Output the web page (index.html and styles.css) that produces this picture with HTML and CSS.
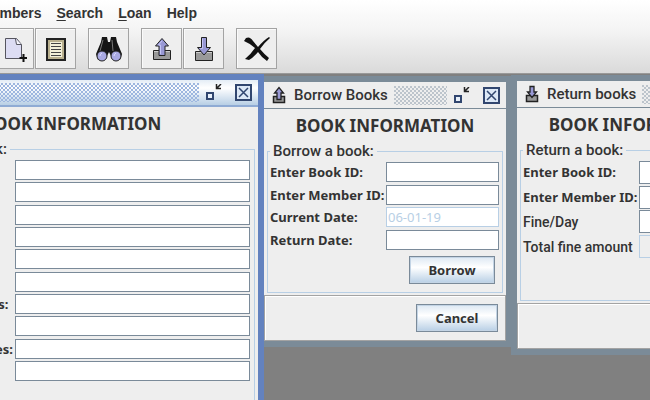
FILE: index.html
```html
<!DOCTYPE html>
<html lang="en">
<head>
<meta charset="utf-8">
<title>Library System</title>
<link rel="stylesheet" href="styles.css">
</head>
<body>
<svg class="defs" aria-hidden="true">
  <symbol id="borrow" viewBox="0 0 22 26">
    <path d="M2.5 14.500h17v9h-17z" fill="#999" stroke="#222"/>
    <path d="M3 15.500h16" stroke="#ccc"/>
    <path d="M8 19.500V10H4.500L11 2.500 17.500 10H14v9.500z" fill="#9999d5" stroke="#222"/>
    <path d="M9.500 18V9H7.500L11 5" fill="none" stroke="#c5c5f5"/>
  </symbol>
  <symbol id="return" viewBox="0 0 22 26">
    <path d="M2.500 15.500h17v9h-17z" fill="#999" stroke="#222"/>
    <path d="M3 16.500h16" stroke="#ccc"/>
    <path d="M8.500 1.500h5v10h4L11 19 4.500 11.500h4z" fill="#9999d5" stroke="#222"/>
    <path d="M9.500 2.500v10h-2" fill="none" stroke="#c5c5f5"/>
  </symbol>
  <symbol id="borrow-small" viewBox="0 0 15 18">
    <path d="M1.500 10.500h11v6h-11z" fill="#999" stroke="#222" stroke-width="1.500"/>
    <path d="M5 13.500V7H2.500L7 1.500 11.500 7H9v6.500z" fill="#9999d5" stroke="#222" stroke-width="1.300"/>
  </symbol>
  <symbol id="return-small" viewBox="0 0 15 18">
    <path d="M1.500 10.500h11v6h-11z" fill="#999" stroke="#222" stroke-width="1.500"/>
    <path d="M5 1.500h4V7h2.500L7 12.500 2.500 7H5z" fill="#9999d5" stroke="#222" stroke-width="1.300"/>
  </symbol>
  <symbol id="iconify" viewBox="0 0 17 17">
    <path d="M2 9h6v6H2z" fill="#e8f0fa" stroke="#31466f" stroke-width="2"/>
    <path d="M16 0l-4 4M11.500 0v4.500H16" fill="none" stroke="#222" stroke-width="1.500"/>
  </symbol>
  <symbol id="close" viewBox="0 0 17 17">
    <path d="M1 1h15v15H1z" fill="#dce8f6" stroke="#31466f" stroke-width="2"/>
    <path d="M4 4l9 9M13 4l-9 9" stroke="#31466f" stroke-width="1.500"/>
  </symbol>
</svg>

<header class="top">
  <nav class="menubar">
    <a href="#">Members</a>
    <a href="#"><u>S</u>earch</a>
    <a href="#"><u>L</u>oan</a>
    <a href="#">Help</a>
  </nav>
  <div class="toolbar">
    <button type="button" aria-label="Add book">
      <svg width="26" height="26" viewBox="0 0 26 26"><path d="M4.500 2.500h11l5 6v14h-16z" fill="#dcdcf3" stroke="#55555f"/><path d="M14.500 3l1 5.500h5" fill="#f4f4fc" stroke="#55555f"/><path d="M22.500 18v8M18.500 22h8" stroke="#111" stroke-width="2"/></svg>
    </button>
    <button type="button" aria-label="List books">
      <svg width="26" height="26" viewBox="0 0 26 26"><path d="M4 3h18v21H4z" fill="#b9b08e" stroke="#222" stroke-width="2"/><path d="M7 6h12v15H7z" fill="#f2efd8"/><path d="M8 7.500h10M8 10.500h10M8 13.500h10M8 16.500h10M8 19.500h10" stroke="#444"/></svg>
    </button>
    <button type="button" class="group" aria-label="Search">
      <svg width="26" height="26" viewBox="0 0 26 26"><path d="M6 1h5l1 5h2l1-5h5l1 5 5 12-2 6h-7l-4-8-4 8H2l-2-6L5 6z" fill="#151515"/><path d="M7 4L4 15M16 4l1 11" stroke="#777"/><circle cx="6" cy="20" r="5" fill="#a9a9e2" stroke="#222"/><circle cx="20" cy="20" r="5" fill="#a9a9e2" stroke="#222"/><path d="M4 20q0-2 2-3M18 20q0-2 2-3" fill="none" stroke="#dedeff"/></svg>
    </button>
    <button type="button" class="group" aria-label="Borrow books"><svg width="22" height="26"><use href="#borrow"/></svg></button>
    <button type="button" aria-label="Return books"><svg width="22" height="26"><use href="#return"/></svg></button>
    <button type="button" class="group" aria-label="Exit">
      <svg width="28" height="28" viewBox="0 0 28 28"><path d="M3 3q4-2 7 3l5 6q6-7 11-10l1 1q-5 4-10 11 5 6 9 9l-2 3q-5-3-9-9-5 6-9 8l-4-1q6-5 10-11Q8 9 1 6z" fill="#111"/></svg>
    </button>
  </div>
</header>

<main class="desktop">
  <section class="window active win-add">
    <div class="titlebar">
      <span class="title">Add Books</span><span class="grip"></span>
      <button type="button" aria-label="Minimize"><svg width="17" height="17"><use href="#iconify"/></svg></button>
      <button type="button" aria-label="Close"><svg width="17" height="17"><use href="#close"/></svg></button>
    </div>
    <h2>BOOK INFORMATION</h2>
    <fieldset>
      <legend>Add a new book:</legend>
      <div class="form">
        <label for="a1">Subject:</label><input id="a1">
        <label for="a2">Title:</label><input id="a2">
        <label for="a3">Author:</label><input id="a3">
        <label for="a4">Publisher:</label><input id="a4">
        <label for="a5">Copyright:</label><input id="a5">
        <label for="a6">Edition:</label><input id="a6">
        <label for="a7">Number of Pages:</label><input id="a7">
        <label for="a8">ISBN:</label><input id="a8">
        <label for="a9">Number of Copies:</label><input id="a9">
        <label for="a10">Library:</label><input id="a10">
      </div>
    </fieldset>
  </section>

  <section class="window win-borrow">
    <div class="titlebar">
      <svg class="app" width="15" height="18"><use href="#borrow-small"/></svg>
      <span class="title">Borrow Books</span><span class="grip"></span>
      <button type="button" aria-label="Minimize"><svg width="17" height="17"><use href="#iconify"/></svg></button>
      <button type="button" aria-label="Close"><svg width="17" height="17"><use href="#close"/></svg></button>
    </div>
    <h2>BOOK INFORMATION</h2>
    <fieldset>
      <legend>Borrow a book:</legend>
      <div class="form">
        <label for="b1">Enter Book ID:</label><input id="b1">
        <label for="b2">Enter Member ID:</label><input id="b2">
        <label for="b3">Current Date:</label><input id="b3" value="06-01-19" disabled>
        <label for="b4">Return Date:</label><input id="b4">
      </div>
      <div class="actions"><button type="button" class="push wide">Borrow</button></div>
    </fieldset>
    <footer><button type="button" class="push">Cancel</button></footer>
  </section>

  <section class="window win-return">
    <div class="titlebar">
      <svg class="app" width="15" height="18"><use href="#return-small"/></svg>
      <span class="title">Return books</span><span class="grip"></span>
      <button type="button" aria-label="Minimize"><svg width="17" height="17"><use href="#iconify"/></svg></button>
      <button type="button" aria-label="Close"><svg width="17" height="17"><use href="#close"/></svg></button>
    </div>
    <h2>BOOK INFORMATION</h2>
    <fieldset>
      <legend>Return a book:</legend>
      <div class="form">
        <label for="r1">Enter Book ID:</label><input id="r1">
        <label for="r2">Enter Member ID:</label><input id="r2">
        <label for="r3" class="plain">Fine/Day</label><input id="r3">
        <label for="r4" class="plain">Total fine amount</label><input id="r4" class="readonly" readonly>
      </div>
      <div class="actions"><button type="button" class="push wide">Return</button></div>
    </fieldset>
    <footer><button type="button" class="push">Cancel</button></footer>
  </section>
</main>
</body>
</html>
```
FILE: styles.css
```css
* { box-sizing: border-box; }

body {
  margin: 0;
  height: 100vh;
  display: flex;
  flex-direction: column;
  overflow: hidden;
  background: #808080;
  color: #333;
  font: bold 13px/16px "Noto Sans", sans-serif;
}

button, input { font: inherit; color: inherit; margin: 0; padding: 0; }
button { display: flex; align-items: center; justify-content: center; }
svg { display: block; }
.defs { position: absolute; width: 0; height: 0; }

.top {
  background: linear-gradient(#fff, #f4f4f4 30px, #dadada);
  border-bottom: 1px solid #999;
}

.menubar {
  display: flex;
  gap: 15px;
  height: 28px;
  margin-left: -20px;
  padding-top: 5px;
  font: bold 14px/16px "Liberation Sans", sans-serif;
}
.menubar a { color: #333; text-decoration: none; }
.menubar u { text-underline-offset: 2px; }

.toolbar {
  display: flex;
  gap: 1px;
  margin-left: -7px;
  padding-bottom: 4px;
}
.toolbar button {
  width: 41px;
  height: 41px;
  background: #eee;
  border: 1px solid #a3a3a3;
  box-shadow: inset 1px 1px #fafafa;
}
.toolbar .group { margin-left: 11px; }

.desktop {
  position: relative;
  flex: 1;
  overflow: hidden;
  background: #808080;
}

/* Internal frames sit freely on the desktop */
.window {
  position: absolute;
  display: flex;
  flex-direction: column;
  border: 6px solid #7b8b98;
  background: #eee;
}
.window.active { border-color: #6382bf; z-index: 2; }
.win-add { left: -120px; top: 0; width: 384px; height: 440px; }
.win-borrow { left: 258px; top: 2px; width: 254px; }
.win-return { left: 511px; top: 1px; width: 254px; }

.titlebar {
  display: flex;
  align-items: center;
  flex: none;
  height: 27px;
  padding: 0 6px 0 8px;
  border-bottom: 1px solid #7b8b98;
}
.active .titlebar {
  background: linear-gradient(#e4edf6, #fff 8px, #b8cfe5);
  border-bottom: 2px solid #8fabd4;
}
.app { margin-right: 7px; }
.title { font: 500 15px/18px Roboto, sans-serif; }
.grip {
  flex: 1;
  height: 19px;
  margin: 0 6px;
  background:
    radial-gradient(circle at 1px 1px, #bcc4cc 1px, transparent 1px) 0 0 / 4px 4px,
    radial-gradient(circle at 1px 1px, #bcc4cc 1px, transparent 1px) 2px 2px / 4px 4px;
}
.active .grip {
  background:
    radial-gradient(circle at 1px 1px, #9db6df 1px, transparent 1px) 0 0 / 4px 4px,
    radial-gradient(circle at 1px 1px, #9db6df 1px, transparent 1px) 2px 2px / 4px 4px;
}
.titlebar button { border: 0; background: none; }
.titlebar button + button { margin-left: 13px; }

h2 {
  margin: 7px 0 6px;
  text-align: center;
  font: bold 17px/20px "Noto Sans", sans-serif;
}

fieldset {
  min-width: 0;
  margin: 0 3px;
  padding: 1px 3px 0 2px;
  border: 1px solid #b8cfe5;
}
.win-add fieldset { flex: 1; padding: 1px 4px 0 3px; }
legend {
  padding: 0 3px;
  font: 500 15px/18px Roboto, sans-serif;
}

.form {
  display: grid;
  grid-template-columns: 116px 1fr;
  grid-auto-rows: 1fr;
  align-items: center;
  height: 90px;
  white-space: nowrap;
}
.win-add .form { height: 223px; grid-template-columns: 122px 1fr; }
.win-return .form { height: 99px; }
.form .plain { font: 500 14px/16px Roboto, sans-serif; }
.form input {
  width: 100%;
  min-width: 0;
  height: 20px;
  padding: 0 1px;
  border: 1px solid #7a8a99;
  background: #fff;
  font-weight: 400;
}
.win-return .form input { height: 23px; }
.form input:disabled { border-color: #b8cfe5; color: #b8cfe5; }
.form .readonly { border-color: #b8cfe5; background: #eee; }

.actions {
  display: flex;
  justify-content: flex-end;
  padding: 5px 4px 8px 0;
}

.push {
  width: 82px;
  height: 28px;
  border: 1px solid #7a8a99;
  box-shadow: inset 0 0 0 1px #c3d4e5;
  background: linear-gradient(#dde8f3, #fff 40%, #b8cfe5);
}
.wide { width: 86px; }

footer {
  display: flex;
  justify-content: flex-end;
  margin-top: 2px;
  padding: 8px 7px;
  border: 1px solid #a3a3a3;
  box-shadow: inset 1px 1px #fff;
}
```
